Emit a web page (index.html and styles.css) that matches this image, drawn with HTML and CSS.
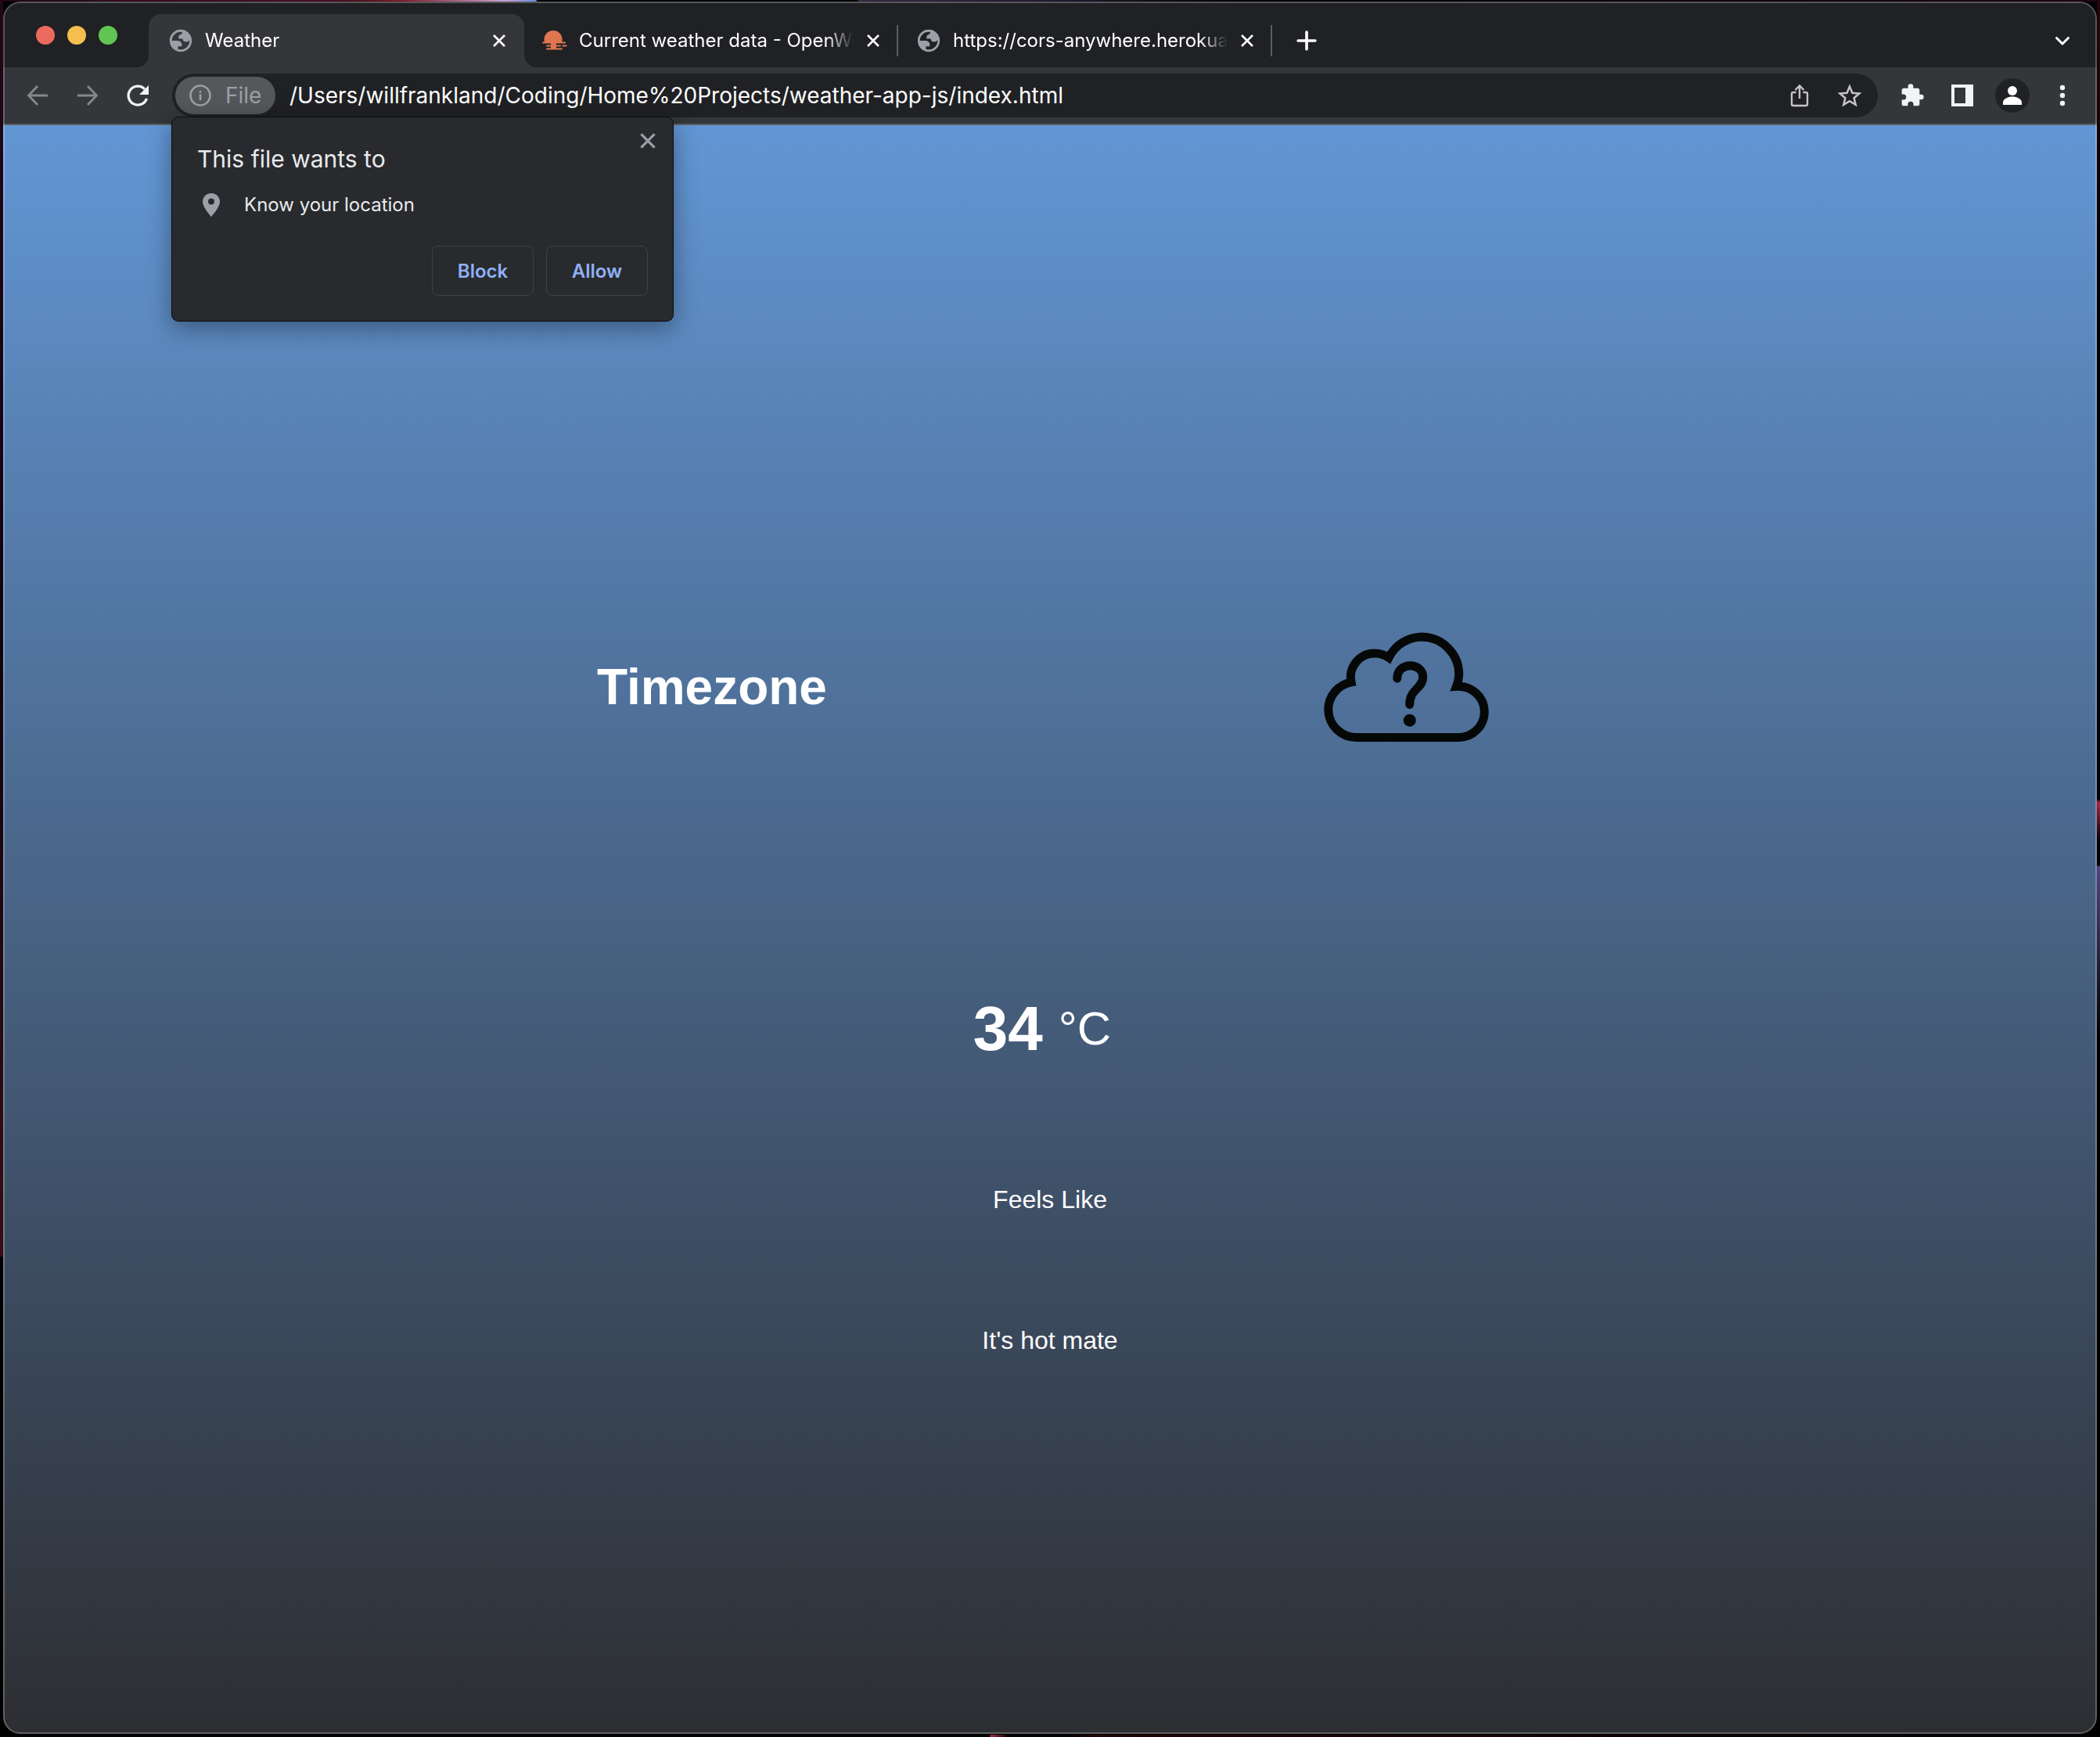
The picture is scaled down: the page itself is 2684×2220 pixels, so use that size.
FILE: index.html
```html
<!DOCTYPE html>
<html lang="en">
<head>
<meta charset="utf-8">
<title>Weather</title>
<link rel="stylesheet" href="styles.css">
</head>
<body>
<svg class="sprite" aria-hidden="true">
  <symbol id="globe" viewBox="0 0 24 24"><path fill-rule="evenodd" d="M12 2C6.480 2 2 6.480 2 12s4.480 10 10 10 10-4.480 10-10S17.520 2 12 2zM4 12h4.400c3.407.022 4.922 1.730 4.543 5.127H9.488v2.470a8.004 8.004 0 0 0 10.498-8.083C19.327 12.504 18.332 13 17 13c-2.137 0-3.206-.916-3.206-2.750h-3.748c-.274-2.728.683-4.092 2.870-4.092 0-.975.327-1.597.811-1.970A8.004 8.004 0 0 0 4 12z"/></symbol>
  <symbol id="cross" viewBox="0 0 18 18"><path d="M2 2l14 14M16 2L2 16" fill="none" stroke="currentColor" stroke-width="2.600"/></symbol>
</svg>
<div class="window">
  <header>
    <div class="tabstrip">
      <div class="lights">
        <button class="light red" aria-label="Close window"></button>
        <button class="light yellow" aria-label="Minimise window"></button>
        <button class="light green" aria-label="Zoom window"></button>
      </div>
      <div class="tab active">
        <svg class="favicon"><use href="#globe"/></svg>
        <span class="tab-title">Weather</span>
        <button class="icon-button tab-close" aria-label="Close tab"><svg><use href="#cross"/></svg></button>
      </div>
      <div class="tab">
        <svg class="favicon sun" viewBox="0 0 34 34"><path d="M4 20C1.500 11 7 4 15 4s13.500 7 11 16z"/><path d="M2 19.500h28M7 23.500h9M20 23.500h4M27.500 23.500h4M7 27.500h19" fill="none" stroke="currentColor" stroke-width="2" stroke-linecap="round"/><path d="M12 19h7v9h-7z"/></svg>
        <span class="tab-title">Current weather data - OpenWeather</span>
        <button class="icon-button tab-close" aria-label="Close tab"><svg><use href="#cross"/></svg></button>
      </div>
      <div class="tab">
        <svg class="favicon"><use href="#globe"/></svg>
        <span class="tab-title">https://cors-anywhere.herokuapp.com</span>
        <button class="icon-button tab-close" aria-label="Close tab"><svg><use href="#cross"/></svg></button>
      </div>
      <button class="icon-button new-tab" aria-label="New tab"><svg viewBox="0 0 28 28"><path d="M14 4.500v19M4.500 14h19" fill="none" stroke="currentColor" stroke-width="3.200" stroke-linecap="round"/></svg></button>
      <button class="icon-button tab-search" aria-label="Search tabs"><svg viewBox="0 0 32 32"><path d="M8.500 12.500L16 20l7.500-7.500" fill="none" stroke="currentColor" stroke-width="3" stroke-linecap="round"/></svg></button>
    </div>
    <div class="toolbar">
      <div class="nav">
        <button class="icon-button dim" aria-label="Back"><svg viewBox="0 0 32 32"><path d="M29 16H5M16 4L4.500 16 16 28" fill="none" stroke="currentColor" stroke-width="2.800"/></svg></button>
        <button class="icon-button dim" aria-label="Forward"><svg viewBox="0 0 32 32"><path d="M3 16h24M16 4l11.500 12L16 28" fill="none" stroke="currentColor" stroke-width="2.800"/></svg></button>
        <button class="icon-button bright" aria-label="Reload"><svg viewBox="0 0 32 32"><path d="M27.500 20A12 12 0 1 1 25 8" fill="none" stroke="currentColor" stroke-width="3.300"/><path d="M30 3v12H18z"/></svg></button>
      </div>
      <div class="omnibox">
        <button class="chip"><svg viewBox="0 0 28 28"><circle cx="14" cy="14" r="12.500" fill="none" stroke="currentColor" stroke-width="2.600"/><path d="M12.700 12.500h2.600V20h-2.600zM12.700 8h2.600v2.600h-2.600z"/></svg>File</button>
        <input class="address" aria-label="Address" value="/Users/willfrankland/Coding/Home%20Projects/weather-app-js/index.html">
        <button class="icon-button soft" aria-label="Share"><svg viewBox="0 0 32 32"><path d="M11.500 12H8a2 2 0 0 0-2 2v13a2 2 0 0 0 2 2h16a2 2 0 0 0 2-2V14a2 2 0 0 0-2-2h-3.500M16 20V4M10.500 9L16 3.500 21.500 9" fill="none" stroke="currentColor" stroke-width="2.400"/></svg></button>
        <button class="icon-button soft" aria-label="Bookmark"><svg viewBox="0 0 32 32"><path d="M16 4.500l3.400 8.200 9 .7-6.800 5.800 2.100 8.700-7.700-4.600-7.700 4.600 2.100-8.700-6.800-5.800 9-.7z" fill="none" stroke="currentColor" stroke-width="2.500"/></svg></button>
      </div>
      <div class="actions">
        <button class="icon-button bright" aria-label="Extensions"><svg viewBox="0 0 24 24"><path d="M20.500 11H19V7a2 2 0 0 0-2-2h-4V3.500a2.500 2.500 0 0 0-5 0V5H4a2 2 0 0 0-2 2v3.800h1.500a2.700 2.700 0 0 1 0 5.400H2V20a2 2 0 0 0 2 2h3.800v-1.500a2.700 2.700 0 0 1 5.400 0V22H17a2 2 0 0 0 2-2v-4h1.500a2.500 2.500 0 0 0 0-5z"/></svg></button>
        <button class="icon-button bright" aria-label="Side panel"><svg viewBox="0 0 32 32"><path d="M2 2h28v28H2zM6 6v20h14V6z" fill-rule="evenodd"/></svg></button>
        <button class="icon-button avatar" aria-label="Profile"><svg viewBox="0 0 32 32"><circle cx="16" cy="10" r="6"/><path d="M4 28v-3c0-5 7-7.500 12-7.500S28 20 28 25v3z"/></svg></button>
        <button class="icon-button bright" aria-label="Menu"><svg viewBox="0 0 32 32"><circle cx="16" cy="6" r="3.200"/><circle cx="16" cy="16" r="3.200"/><circle cx="16" cy="26" r="3.200"/></svg></button>
      </div>
    </div>
  </header>
  <main class="page">
    <section class="location">
      <h1 class="timezone">Timezone</h1>
      <svg class="weather-icon" viewBox="-4 0 256 256" role="img" aria-label="Unknown weather">
        <g fill="none" stroke="#050807" stroke-width="11">
          <path d="M65 192.500A36 36 0 0 1 28.700 157A36 36 0 0 1 58 121.800A30.500 30.500 0 0 1 88 85A30.500 30.500 0 0 1 106 90.500A48 48 0 0 1 147.700 64A48 48 0 0 1 195.700 112A48 48 0 0 1 192.500 127.300A33 33 0 0 1 228.300 159.500A33 33 0 0 1 195 192.500Z"/>
          <path d="M116.700 117C117 95 149.700 96 149.700 115.500C149.700 130 132 131 132.700 150.500" stroke-linecap="round"/>
        </g>
        <circle cx="132.700" cy="170.700" r="8" fill="#050807"/>
      </svg>
    </section>
    <section class="temperature">
      <h2 class="degree">34</h2>
      <span class="unit">°C</span>
    </section>
    <p class="note feels">Feels Like</p>
    <p class="note">It's hot mate</p>
  </main>
  <div class="permission" role="dialog" aria-labelledby="ask">
    <button class="icon-button dismiss" aria-label="Dismiss"><svg><use href="#cross"/></svg></button>
    <h2 class="ask" id="ask">This file wants to</h2>
    <p class="request"><svg viewBox="0 0 32 32"><path d="M16 1C9.700 1 5 5.700 5 11.700 5 19 16 31 16 31s11-12 11-19.300C27 5.700 22.300 1 16 1zm0 6.500a4 4 0 1 1 0 8 4 4 0 0 1 0-8z" fill-rule="evenodd"/></svg>Know your location</p>
    <div class="choices">
      <button class="choice">Block</button>
      <button class="choice">Allow</button>
    </div>
  </div>
</div>
</body>
</html>
```
FILE: styles.css
```css
* { box-sizing: border-box; }

body {
  margin: 0;
  min-height: 100vh;
  padding: 2px 4px 4px;
  display: flex;
  background:
    linear-gradient(90deg, #21061a, #4b1021 17%, #7c1926 19%, #c9a0d0 24%, #6a8fe0 25.5%, #000 25.6%, #000 40.8%, #352843 40.9%, #20182c 50%, #000 60%, #1d0611) top / 100% 2px no-repeat,
    linear-gradient(90deg, #000 47.1%, #a02a40 47.2%, #000 48%, #000 51%, #200505 52%, #000) bottom / 100% 3px no-repeat,
    linear-gradient(#21061a, #12040e 40%, #3a0c14 72.3%, #000 72.400%) left / 4px 100% no-repeat,
    linear-gradient(#24060d, #000 20%, #000 46%, #b0203c 46.200%, #000 48.500%, #000 49.800%, #53447c 49.900%, #000 60%) right / 4px 100% no-repeat,
    #000;
  font-family: Inter, "Liberation Sans", sans-serif;
}

.sprite { position: absolute; width: 0; height: 0; }

button {
  border: 0;
  padding: 0;
  background: none;
  color: inherit;
  font: inherit;
}

svg { fill: currentColor; display: block; }

.window {
  position: relative;
  flex: 1;
  display: flex;
  flex-direction: column;
  border-radius: 22px;
  overflow: hidden;
  background: #35363a;
}

/* hairline around the whole window */
.window::after {
  content: "";
  position: absolute;
  inset: 0;
  border: 2px solid rgba(255, 255, 255, 0.24);
  border-radius: 22px;
  pointer-events: none;
}

.tabstrip {
  display: flex;
  align-items: flex-end;
  height: 84px;
  padding-right: 28px;
  background: #202124;
  color: #fff;
}

.lights {
  align-self: center;
  display: flex;
  gap: 16px;
  width: 186px;
  padding: 0 0 0 42px;
  margin-top: 2px;
}

.light { width: 24px; height: 24px; border-radius: 50%; }
.red { background: #ec6a5e; }
.yellow { background: #f4bf4f; }
.green { background: #61c554; }

.tab {
  position: relative;
  display: flex;
  align-items: center;
  width: 478px;
  height: 68px;
  padding: 0 23px 0 22px;
  font-size: 24px;
  line-height: 32px;
}

.tab.active {
  width: 480px;
  padding-left: 24px;
  border-radius: 16px 16px 0 0;
  background: #35363a;
}

.tab.active::before,
.tab.active::after {
  content: "";
  position: absolute;
  bottom: 0;
  width: 16px;
  height: 16px;
}

.tab.active::before {
  right: 100%;
  background: radial-gradient(circle at 0 0, transparent 16px, #35363a 16px);
}

.tab.active::after {
  left: 100%;
  background: radial-gradient(circle at 100% 0, transparent 16px, #35363a 16px);
}

.tab:not(.active)::after {
  content: "";
  position: absolute;
  right: 0;
  top: 14px;
  width: 2px;
  height: 40px;
  background: #5c5d61;
}

.favicon { flex: none; width: 34px; height: 34px; color: #9aa0a6; }
.favicon.sun { color: #de7651; }

.tab-title {
  flex: 1;
  min-width: 0;
  margin: 0 16px 0 14px;
  overflow: hidden;
  white-space: nowrap;
  -webkit-mask-image: linear-gradient(90deg, #000 calc(100% - 36px), transparent);
  mask-image: linear-gradient(90deg, #000 calc(100% - 36px), transparent);
}

.icon-button {
  flex: none;
  display: grid;
  place-items: center;
  width: 32px;
  height: 32px;
}

.icon-button svg { width: 32px; height: 32px; }
.icon-button.tab-close { width: 18px; }
.tab-close svg { width: 18px; height: 18px; }
.dismiss svg { width: 22px; height: 22px; }
.new-tab { margin: 0 auto 18px 28px; }
.tab-search { margin-bottom: 18px; }

.toolbar {
  display: flex;
  align-items: center;
  height: 74px;
  padding: 0 28px;
  border-bottom: 2px solid #5c5d61;
}

.nav { display: flex; gap: 32px; margin-right: 28px; }
.dim { color: #86878a; }
.bright { color: #f1f3f4; }
.soft { color: #c4c4c5; }

.omnibox {
  flex: 1;
  display: flex;
  align-items: center;
  gap: 32px;
  height: 56px;
  padding: 4px 20px 4px 4px;
  border-radius: 28px;
  background: #202124;
}

.chip {
  display: flex;
  align-items: center;
  gap: 18px;
  width: 128px;
  height: 48px;
  padding-left: 18px;
  border-radius: 24px;
  background: #56575a;
  color: #9aa0a6;
  font-size: 28px;
}

.chip svg { width: 28px; height: 28px; }

.address {
  flex: 1;
  min-width: 0;
  margin-left: -14px;
  padding: 0;
  border: 0;
  outline: 0;
  background: none;
  color: #fff;
  font: 28px/36px Inter, "Liberation Sans", sans-serif;
}

.actions { display: flex; align-items: center; gap: 32px; margin-left: 28px; }

.icon-button.avatar {
  width: 44px;
  height: 44px;
  margin: 0 -6px;
  border-radius: 50%;
  background: #202124;
  color: #fff;
}

.page {
  flex: 1;
  display: flex;
  flex-direction: column;
  align-items: center;
  padding: 590px 0 64px;
  background: linear-gradient(#6296d4, #2d2e32);
  color: #fff;
  font-family: "Liberation Sans", Arial, sans-serif;
}

.location {
  display: flex;
  justify-content: space-around;
  align-items: center;
  width: 66%;
}

.timezone { margin: 0; font-size: 64px; line-height: 76px; }
.weather-icon { width: 256px; height: 256px; }

.temperature { display: flex; align-items: center; margin-top: 263px; }
.degree { margin: 0; font-size: 80px; line-height: 92px; }
.unit { margin: 0 20px; font-size: 60px; line-height: 72px; }

.note { margin: 0 0 140px; font-size: 32px; line-height: 40px; }
.note:last-child { margin-bottom: 0; }
.feels { margin-top: 152px; }

/* permission bubble, anchored under the address bar */
.permission {
  position: absolute;
  left: 216px;
  top: 148px;
  width: 640px;
  padding: 33px 32px 32px;
  border-radius: 8px;
  background: #292a2d;
  box-shadow: 0 0 0 1px #0b0c0e, 0 8px 32px rgba(0, 0, 0, 0.4);
  color: #e8eaed;
}

.dismiss { position: absolute; right: 16px; top: 14px; color: #9aa0a6; }

.ask { margin: 0; font-size: 30px; font-weight: 400; line-height: 40px; }

.request {
  display: flex;
  align-items: center;
  gap: 26px;
  margin: 22px 0 35px;
  padding-left: 2px;
  font-size: 24px;
  line-height: 34px;
}

.request svg { width: 32px; height: 32px; color: #9aa0a6; }

.choices { display: flex; justify-content: flex-end; gap: 16px; }

.choice {
  width: 130px;
  height: 64px;
  border: 1px solid #3f4145;
  border-radius: 8px;
  color: #8fb0f5;
  font-size: 24px;
  font-weight: 600;
}
```
